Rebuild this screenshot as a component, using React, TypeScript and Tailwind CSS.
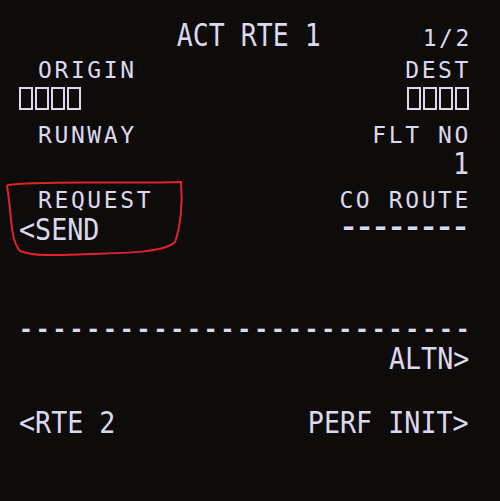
const big = "inline-block whitespace-pre text-[30px] leading-[30px] scale-x-[0.89]";
const small = "inline-block whitespace-pre text-[23px] leading-[23px] tracking-[2.6px]";

function Boxes() {
  return (
    <div className="flex gap-[2px]">
      {[0, 1, 2, 3].map((i) => (
        <div key={i} className="w-[14px] h-[23px] border-2 border-[#ddd8ee]" />
      ))}
    </div>
  );
}

export default function App() {
  return (
    <div className="relative w-[500px] h-[501px] overflow-hidden bg-[#0d0c0a] text-[#ddd8ee] font-['DejaVu_Sans_Mono',monospace] pl-[19px] pr-[31px]">
      {/* title */}
      <div className="flex items-baseline justify-between pt-[19px]">
        <span className="w-[60px]" />
        <span className="inline-block whitespace-pre text-[32px] leading-[32px] scale-x-[0.83] ml-[6px]">
          ACT RTE 1
        </span>
        <span className={`${small} w-[60px] text-right mr-[-3px]`}>1/2</span>
      </div>

      {/* line 1 */}
      <div className="flex justify-between mt-[8px]">
        <span className={`${small} ml-[19px]`}>ORIGIN</span>
        <span className={`${small} mr-[-2px]`}>DEST</span>
      </div>
      <div className="flex justify-between mt-[5px]">
        <Boxes />
        <Boxes />
      </div>

      {/* line 2 */}
      <div className="flex justify-between mt-[14px]">
        <span className={`${small} ml-[19px]`}>RUNWAY</span>
        <span className={`${small} mr-[-2px]`}>FLT NO</span>
      </div>
      <div className="flex justify-end mt-[2px]">
        <span className={`${big} origin-right`}>1</span>
      </div>

      {/* line 3 */}
      <div className="flex justify-between items-start mt-[10px]">
        <span className={`${small} ml-[19px]`}>REQUEST</span>
        <span className={`${small} mr-[-2px]`}>CO ROUTE</span>
      </div>
      <div className="flex justify-between items-start mt-[3px]">
        <span className={`${big} origin-left`}>&lt;SEND</span>
        <span className="inline-block whitespace-pre text-[24px] leading-[24px] font-bold tracking-[-1.65px] scale-x-[1.25] origin-right mr-[2px]">
          --------
        </span>
      </div>

      {/* line 5 */}
      <div className="flex justify-between mt-[73px]">
        <span className={`${small} font-bold tracking-[2.95px]`}>---------------------------</span>
      </div>
      <div className="flex justify-end mt-[3px]">
        <span className={`${big} origin-right`}>ALTN&gt;</span>
      </div>

      {/* line 6 */}
      <div className="flex justify-between mt-[34px]">
        <span className={`${big} origin-left`}>&lt;RTE 2</span>
        <span className={`${big} origin-right`}>PERF INIT&gt;</span>
      </div>

      {/* hand-drawn annotation */}
      <svg
        className="absolute left-0 top-0 pointer-events-none"
        width="500"
        height="501"
        viewBox="0 0 500 501"
      >
        <path
          d="M8 185 C 40 180, 120 184, 181 182 C 183 205, 180 228, 175 242 C 165 252, 130 253, 90 254 C 60 255, 35 257, 20 251 C 10 240, 12 215, 7 186"
          fill="none"
          stroke="#e0232b"
          strokeWidth="2"
          strokeLinecap="round"
        />
      </svg>
    </div>
  );
}
